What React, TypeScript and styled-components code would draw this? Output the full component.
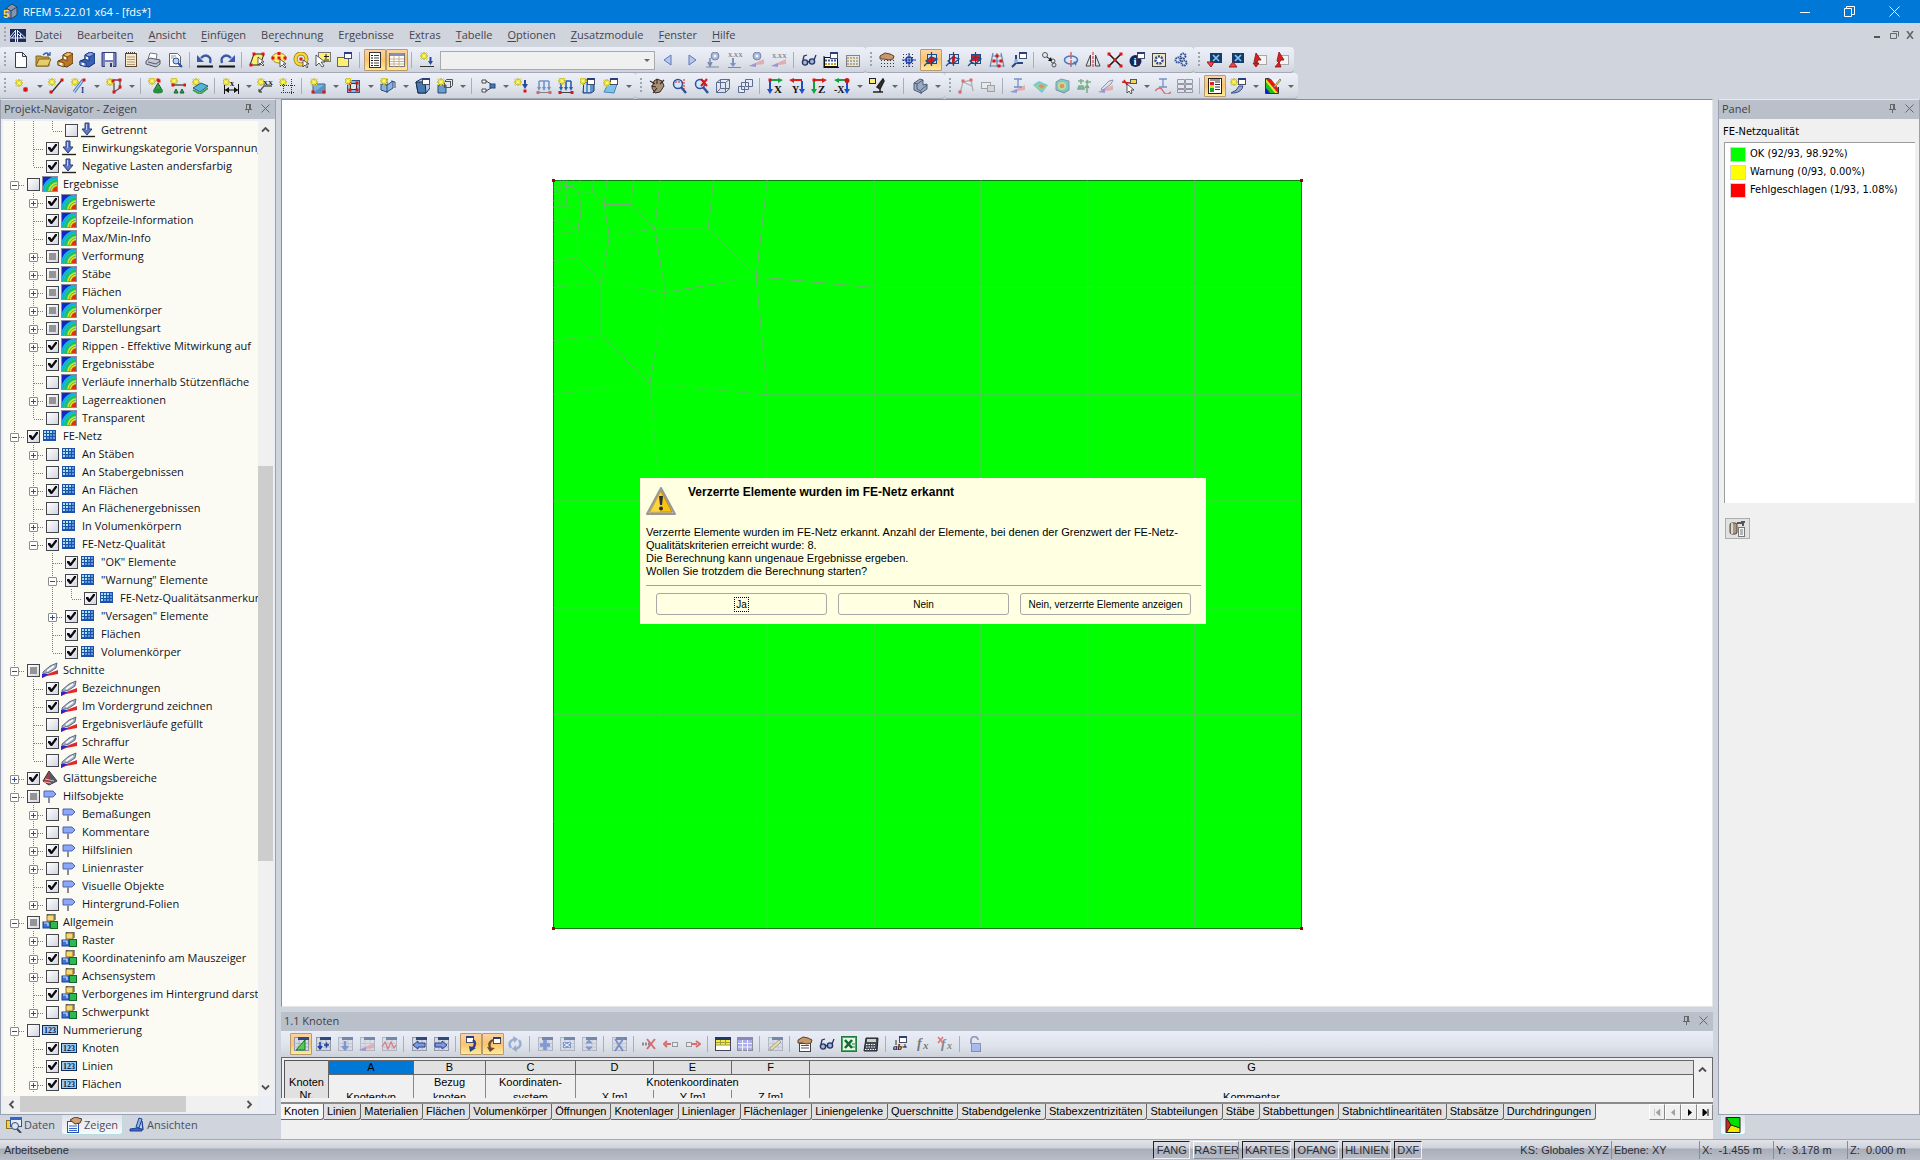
import React, { Fragment, ReactNode, useEffect, useRef } from 'react';
import styled, { createGlobalStyle, css } from 'styled-components';

const UI = '"Open Sans", "Noto Sans", sans-serif';
const PANEL = '"DejaVu Sans Condensed", "DejaVu Sans", sans-serif';
const SANS = '"Liberation Sans", Arial, sans-serif';

const Global = createGlobalStyle`
  * { box-sizing: border-box; }
  body { margin: 0; font: 11px/14px ${UI}; color: #12121c; }
  button, input, select { font: inherit; color: inherit; margin: 0; padding: 0; border: 0; background: none; }
  svg { display: block; flex: none; }
  h1, h2, p, ul { margin: 0; padding: 0; font: inherit; list-style: none; }
`;

/* ---------- icon drawing parts ---------- */

type PProps = { d: string; s?: string; f?: string; w?: number; dash?: string; o?: number };
const P = ({ d, s, f = 'none', w = 1, dash, o }: PProps) => (
  <path d={d} stroke={s ?? 'none'} fill={f} strokeWidth={w} strokeDasharray={dash} opacity={o} />
);
const R = ({ x, y, w, h, f = 'none', s }: { x: number; y: number; w: number; h: number; f?: string; s?: string }) => (
  <rect x={x} y={y} width={w} height={h} fill={f} stroke={s} />
);
const Star = ({ x = 4, y = 4 }: { x?: number; y?: number }) => (
  <>
    <P d={`M${x - 4} ${y}h8M${x} ${y - 4}v8M${x - 3} ${y - 3}l6 6M${x + 3} ${y - 3}l-6 6`} s="#a39a18" w={1.6} />
    <P d={`M${x - 4} ${y}h8M${x} ${y - 4}v8M${x - 3} ${y - 3}l6 6M${x + 3} ${y - 3}l-6 6`} s="#f4ea3c" w={1} />
    <circle cx={x} cy={y} r={1.8} fill="#fff86a" />
  </>
);
const Node = ({ at }: { at: number[][] }) => (
  <>{at.map(([x, y]) => <R key={`${x}-${y}`} x={x - 1.5} y={y - 1.5} w={3} h={3} f="#e01414" />)}</>
);
const Txt = ({ x, y, t, c = '#111', z = 7, i }: { x: number; y: number; t: string; c?: string; z?: number; i?: boolean }) => (
  <text x={x} y={y} fontSize={z} fill={c} fontFamily="Liberation Serif, serif" fontStyle={i ? 'italic' : 'normal'} fontWeight="bold">{t}</text>
);
const MiniWin = ({ x = 8, y = 0 }: { x?: number; y?: number }) => (
  <><R x={x + 0.5} y={y + 0.5} w={7} h={6} f="#fff" s="#444c68" /><R x={x} y={y} w={8} h={2} f="#2b3f7c" /></>
);
const Sheet = ({ c = '#d6dae4' }: { c?: string }) => (
  <>
    <R x={1.5} y={1.5} w={14} h={13} f={c} s="#9298a8" />
    <P d="M1 7.500h14M1 11h14M6 4v11M11 4v11" s="#aeb4c4" />
    <R x={5} y={1} w={11} h={3} f="#30497f" />
  </>
);
const Slope = () => <><P d="M0 14L15 7V12z" f="#e88a8a" /><P d="M0 14L7 11V15z" f="#6a6ad8" /></>;
const Glasses = () => (
  <>
    <circle cx={4} cy={10.500} r={2.600} fill="#9fb6e8" stroke="#28345c" strokeWidth={1.4} />
    <circle cx={11} cy={9.500} r={2.600} fill="#9fb6e8" stroke="#28345c" strokeWidth={1.4} />
    <P d="M6.500 10l2-.5M2 8l1-4 3-1M13 8l2-5" s="#28345c" w={1.3} />
  </>
);
const Cabinet = ({ a, l, b }: { a: string; l: string; b: string }) => (
  <>
    <P d="M6 3l5-3 5 2v9l-6 4-9-2V9l5-2z" f={a} s={b} />
    <P d="M6 3l5-3 5 2-6 3z" f={l} s={b} w={0.7} />
    <P d="M6 3v4l4 2V5zM1 9v4l6 2v-4z" f={l} s={b} w={0.7} />
    <R x={7} y={5} w={2} h={2} f="#fff" /><R x={3} y={11} w={2} h={2} f="#fff" />
  </>
);
const Rainbow = () => (
  <>
    <R x={0} y={0} w={16} h={16} f="#1028c8" />
    <P d="M0 16A16 16 0 0 1 16 0V16z" f="#18b8e8" />
    <P d="M3 16A13 13 0 0 1 16 3V16z" f="#20cc58" />
    <P d="M6 16A10 10 0 0 1 16 6V16z" f="#d8e020" />
    <P d="M10 16a6 6 0 0 1 6-6v6z" f="#e03010" />
    <P d="M1.500 16A14.500 14.500 0 0 1 16 1.500M4.500 16A11.500 11.500 0 0 1 16 4.500M8 16a8 8 0 0 1 8-8" s="#0c9ad0" w={0.6} />
    <R x={0.5} y={0.5} w={15} h={15} s="#8c8c9c" />
  </>
);
const Mesh = () => (
  <>
    <R x={1} y={2} w={13} h={11} f="#1e50a8" />
    {[3, 6, 9].map((y) => [2, 5, 8, 11].map((x) => <R key={`${x}.${y}`} x={x} y={y} w={2} h={2} f={x + y < 12 ? '#a8e4fa' : '#5c9ce0'} />))}
  </>
);
const Plane = ({ r }: { r: string }) => (
  <>
    <R x={4.5} y={2.5} w={9} h={9} f="#cfe2f4" s="#1d4c88" />
    <P d={r} f="#e81818" />
    <P d="M8.500 0v14M3 9l5-4 6 2-6 5zM1 14l4-4" s="#1d4c88" w={1.2} />
  </>
);
const Axis = ({ l, a, b }: { l: string; a: string; b: string }) => (
  <>
    <P d="M3 2h9" s={a} w={2} /><P d="M11 0l5 2-5 3z" f={a} />
    <P d="M3 2v9" s={b} w={2} /><P d="M0 11h6l-3 5z" f={b} /><Node at={[[3, 2]]} />
    <Txt x={7} y={15} t={l} z={11} />
  </>
);
const AxisBack = ({ l, a, b, x }: { l: string; a: string; b: string; x: number }) => (
  <>
    <P d="M4 2h9" s={a} w={2} /><P d="M5 0L0 2l5 3z" f={a} />
    <P d="M13 3v8" s={b} w={2} /><P d="M10 11h6l-3 5z" f={b} />
    <Txt x={x} y={15} t={l} z={10} />
  </>
);
const Loads = () => (
  <><P d="M3 3v8M8 3v8M13 3v8M3 3h10" s="#2b5fae" w={1.6} /><P d="M1 9h4l-2 4zM6 9h4l-2 4zM11 9h4l-2 4z" f="#2b5fae" /><P d="M1 14.500h14" s="#444" /><Node at={[[2, 14.500], [14, 14.500]]} /></>
);
const Magnifier = () => <><circle cx={7} cy={6} r={4.5} fill="#d4e6fa" stroke="#30509c" strokeWidth={1.5} /><P d="M10 9l5 6" s="#30509c" w={2.4} /></>;
const BlueX = ({ d }: { d: string }) => (
  <><R x={3} y={1} w={12} h={10} f="#143c6c" /><P d="M6 3l6 6M12 3L6 9" s="#8ac8f0" w={1.6} /><P d={d} f="#e84a4a" s="#a01818" /></>
);
const RedArrow = ({ d }: { d: string }) => (
  <><R x={5.5} y={3.5} w={10} h={9} f="#f4f4f4" s="#a8a8a8" /><P d={d} f="#d82020" s="#8c1010" w={0.8} /></>
);
const Hand = () => <P d="M1 4l5-3 5 1 4 2-1 3-4 1-5-1H1z" f="#c89868" s="#5a4030" />;
const Dots = () => <P d="M2 8.500h13M2 11.500h13M2 14.500h13" s="#333" dash="1 2" />;
const Arrow = ({ d }: { d: string }) => <P d={d} f="#7d9ae0" s="#2b438c" />;

const icons: Record<string, ReactNode> = {
  neu: <P d="M2.500 .5h7l4 4v11h-11zM9.500 .5v4h4" f="#fff" s="#3c3c48" />,
  oeffnen: <><P d="M1 4h5l1 1h7v9H1z" f="#c8a038" s="#80641c" /><P d="M1 14l3-7h12l-3 7z" f="#e8cc6c" s="#80641c" /><P d="M8 3q4-4 6 0M12 3h3V0" s="#2860a8" w={1.3} /></>,
  block: <Cabinet a="#b87828" l="#eab868" b="#5c380c" />,
  blockBlau: <Cabinet a="#3860b8" l="#80a4e8" b="#142c68" />,
  speichern: <><P d="M1 .5h14v14H1z" f="#7480c0" s="#343c70" /><R x={4} y={1} w={8} h={7} f="#fff" /><R x={4} y={10} w={8} h={5} f="#d8d8e0" /><R x={9} y={11} w={2} h={4} f="#343c70" /></>,
  protokoll: <><R x={2.5} y={1.5} w={11} h={13} f="#f8e8cc" s="#604828" /><P d="M4 5h8M4 7.500h8M4 10h8M4 12.500h8" s="#b09878" /><P d="M3 1h10" s="#444" w={2} dash="1 1" /></>,
  drucken: <><P d="M5 1l7 1-1 6-8-1z" f="#fff" s="#777" /><P d="M1 9l4-3 10 2v4l-4 3L1 12z" f="#c4c8d4" s="#55586a" /><P d="M3 10l8 2 4-3" s="#55586a" /></>,
  vorschau: <><P d="M2.500 1.500h8l3 3v10h-11z" f="#fff" s="#666" /><P d="M4 4h5M4 6h3" s="#999" /><circle cx={9} cy={9} r={3} fill="#b4d4f8" stroke="#30509c" /><P d="M11 11l4 4" s="#30509c" w={2} /></>,
  rueckgaengig: <><P d="M4 6q5-5 9 0 1 2 0 5" s="#3c58a8" w={2.4} /><P d="M0 3v7h7z" f="#3c58a8" /><P d="M0 14.500h16" s="#111" w={2} /></>,
  wiederholen: <><P d="M12 6Q7 1 3 6q-1 2 0 5" s="#3c58a8" w={2.4} /><P d="M16 3v7H9z" f="#3c58a8" /><P d="M0 14.500h16" s="#111" w={2} /></>,
  polygon: <><P d="M5 2h10l-4 11H1z" f="#fdf070" s="#222" /><Node at={[[5, 2], [14, 2], [2, 13]]} /><P d="M9 5v8l2-2 3 3 1-1-3-3h3z" f="#fff" s="#222" w={0.7} /></>,
  kreis: <><ellipse cx={8} cy={6} rx={7} ry={5} fill="#fdf070" stroke="#a89020" /><Node at={[[8, 1.500], [2, 6], [14, 6], [8, 6]]} /><P d="M9 7v8l2-2 3 3 1-1-3-3h3z" f="#fff" s="#222" w={0.7} /></>,
  ring: <><circle cx={8} cy={7} r={5.500} fill="none" stroke="#8c7810" strokeWidth={4} /><circle cx={8} cy={7} r={5.500} fill="none" stroke="#f8d830" strokeWidth={2.600} /><Node at={[[8, 7]]} /><P d="M10 8v7l2-2 2 3 1-1-2-3h3z" f="#fff" s="#222" w={0.7} /></>,
  auswahlPlus: <><R x={3.5} y={0.5} w={12} h={9} f="#fdf070" s="#777" /><P d="M11 2v5M9 4.500h5M9 8h5" s="#222" /><P d="M1 3v11l3-3 3 4 2-1-3-4h4z" f="#fff" s="#333" w={0.8} /></>,
  neuFenster: <><R x={0.5} y={5.5} w={11} h={9} f="#fdf070" s="#666" /><MiniWin x={7} /></>,
  liste: <><R x={2.5} y={0.5} w={11} h={15} f="#fff" s="#333" /><P d="M4 3.500h2M4 6h2M4 8.500h2M4 11h2M4 13.500h2" s="#111" /><P d="M7 3.500h5M7 6h5M7 8.500h5M7 11h5M7 13.500h5" s="#444" /></>,
  tabelle: <><R x={0.5} y={1.5} w={15} h={13} f="#fff" s="#777" /><R x={1} y={1} w={14} h={3} f="#7c94b8" /><P d="M1 7h14M1 9.500h14M1 12h14M5 4v11M10 4v11" s="#cdb088" /></>,
  lastfall: <><Star x={5} y={4} /><P d="M11.500 5v6" s="#2b4b98" w={2} /><P d="M9 9h5l-2.500 4z" f="#2b4b98" /><P d="M1 14.500h14" s="#333" /></>,
  zurueck: <P d="M10 3v10L3 8z" f="#b8c8f0" s="#5c78b8" />,
  vor: <P d="M6 3v10l7-5z" f="#b8c8f0" s="#5c78b8" />,
  ergebnis: <><circle cx={10} cy={4} r={4} fill="#7c94c8" stroke="#3c4c78" /><circle cx={10} cy={4} r={1.600} fill="#fff" /><P d="M5 6v8M3 10l2 4 2-4" s="#30509c" w={1.500} /><P d="M1 15h13" s="#555" /></>,
  werteLast: <><Txt x={1} y={5} t="X.XX" z={6} c="#333" /><P d="M6 6v7" s="#3c5cb0" w={2} /><P d="M3 11h6l-3 4z" f="#3c5cb0" /><P d="M1 15.500h13" s="#555" /></>,
  auge: <><Slope /><circle cx={8} cy={4} r={4} fill="#7c94c8" stroke="#3c4c78" /><circle cx={8} cy={4} r={1.600} fill="#fff" /></>,
  werte: <><Slope /><Txt x={1} y={6} t="X.XX" z={6} c="#333" /></>,
  brille: <Glasses />,
  rechner: <><R x={1.5} y={5.5} w={13} h={9} f="#fff" s="#111" /><MiniWin x={7} /><P d="M2 8.500h12" s="#3858b0" w={2} dash="2 1" /><P d="M2 12h12" s="#c8a020" w={2} dash="2 1" /><P d="M1 15.500h15M1 4v12" s="#111" /></>,
  abakus: <><R x={1.500} y={3.5} w={13} h={11} f="#e8e8ec" s="#444" /><P d="M2 6h12M2 9h12M2 12h12" s="#a08840" w={2} dash="2 1" /></>,
  rasterHand: <><Dots /><Hand /></>,
  fang: <><P d="M2 2.500h12M2 5.500h12M2 8.500h12M2 11.500h12M2 14.500h12" s="#333" dash="1 2" /><P d="M8 1v14M1 8h14" s="#1c3ca8" /><circle cx={8} cy={8} r={3} fill="none" stroke="#1c3ca8" strokeWidth={1.500} /></>,
  ebeneXY: <Plane r="M3 9l5-4 6 2-6 5z" />,
  ebeneYZ: <Plane r="M7 5l3-3v7l-3 3z" />,
  ebeneXZ: <Plane r="M5 3h8v6H5z" />,
  linienraster: <><P d="M4 1L1 15M8 1v14M12 1l3 14M3 4h10M2 9h12M1 14h14" s="#6c88a8" w={1.2} /><Node at={[[8, 4], [12, 9], [5, 9], [10, 14]]} /></>,
  achsen: <><P d="M5 3v8l-4 4M5 11h7" s="#28487c" w={2} /><circle cx={5} cy={9} r={2} fill="#90b4e8" /><MiniWin /></>,
  kopieren: <><circle cx={4} cy={3} r={2.500} fill="none" stroke="#555" /><circle cx={12} cy={9} r={2} fill="none" stroke="#555" /><circle cx={13} cy={13} r={2} fill="none" stroke="#555" /><P d="M6 5l4 3" s="#111" /><P d="M11 9l-4 0 3-4z" f="#111" /></>,
  drehen: <><P d="M8 0v16" s="#d82020" dash="3 1" /><ellipse cx={8} cy={8} rx={6.500} ry={4} fill="none" stroke="#4c78c0" strokeWidth={1.600} /><P d="M10 10l4-1-1 5z" f="#4c78c0" /></>,
  spiegeln: <><P d="M8 0v16" s="#d82020" dash="3 1" /><P d="M1 14L5.500 3v11zM15 14L10.500 3v11z" s="#444" /></>,
  skalieren: <><P d="M2 2l12 12M14 2L2 14" s="#111" w={1.500} /><Node at={[[2, 2], [14, 2], [2, 14], [14, 14], [8, 8]]} /></>,
  info: <><circle cx={6.500} cy={9} r={6} fill="#14285c" /><Txt x={4.500} y={13} t="i" z={11} c="#fff" /><MiniWin /></>,
  einstellung: <><R x={1.5} y={1.5} w={13} h={13} f="#f0e4c8" s="#444" /><circle cx={8} cy={8} r={3.500} fill="#fff" stroke="#2c4c90" strokeWidth={2.500} strokeDasharray="2 1" /></>,
  zahnraeder: <>{[[10, 4], [5, 8], [11, 11]].map(([x, y]) => <circle key={y} cx={x} cy={y} r={2.500} fill="#dce8fa" stroke="#2c4c90" strokeWidth={2} strokeDasharray="1.500 .7" />)}</>,
  ansichtAb: <BlueX d="M0 10h7l-3 5z" />,
  ansichtAuf: <BlueX d="M0 15h8l-4-5z" />,
  pfeilAb: <RedArrow d="M5 1l5 7H7l-1 3-3-1zM2 11h6l-3 4z" />,
  pfeilAuf: <RedArrow d="M6 0l5 8H8l-2 3-2-2zM2 15h6l-2-5z" />,

  knoten: <><Star x={5} y={5} /><Node at={[[11, 11], [12, 11], [11, 12], [12, 12]]} /></>,
  linie: <><Star /><P d="M3 15L14 2" s="#333" w={1.3} /><Node at={[[3, 14], [14, 2]]} /></>,
  stab: <><Star /><P d="M3 14L12 2" s="#4c7cb8" w={3} /><P d="M3 14L12 2" s="#c0dcf4" w={1.2} /><Node at={[[13, 2]]} /><Txt x={10} y={15} t="I" z={8} c="#1c3c8c" /></>,
  linienzug: <><Star /><P d="M7 2h7v8l-6 4V5" s="#555" w={1.3} /><Node at={[[7, 3], [14, 2], [14, 9], [8, 14]]} /></>,
  knotenlager: <><Star x={4} y={3} /><P d="M10 5l4 7H6z" f="#38a048" s="#14602c" /><ellipse cx={10} cy={13} rx={5} ry={2.500} fill="#2c8c3c" /><Node at={[[10, 2], [11, 3]]} /></>,
  linienlager: <><Star x={4} y={3} /><P d="M3 7h12" s="#555" w={1.5} /><Node at={[[3, 7], [15, 7]]} /><P d="M4 15l2-4 2 4zM10 15l2-4 2 4z" f="#38a048" s="#14602c" /></>,
  flaechenlager: <><Star x={4} y={4} /><P d="M1 10l8-5 7 3-8 6z" f="#54b4d8" s="#20607c" /><P d="M1 12l7 4 8-6" s="#38a048" w={2} /></>,
  mass: <><Star x={3} y={4} /><P d="M1.500 7v9M15.500 6v10M2 12h13" s="#111" /><P d="M2 12l4-3v6zM15 12l-4-3v6z" f="#111" /><Txt x={7} y={8} t="x" z={8} /></>,
  massXX: <><Star /><Txt x={6} y={7} t="XX" z={7} /><P d="M2 14l5-6h8M2 14v-3M2 14h3" s="#555" w={1.300} /></>,
  hilfslinie: <><Star /><P d="M4.500 6v10M12.500 1v15M1 7.500h15M2 14.500h14" s="#333" dash="1 1" /></>,
  flaeche: <><P d="M3 6h12v9H3z" f="#80b0dc" s="#3c648c" /><P d="M4 14L14 7v7z" f="#5c90c4" /><Star /><Node at={[[3, 14], [14, 14]]} /></>,
  oeffnung: <><R x={2.5} y={2.5} w={12} h={12} f="#8fb8e0" s="#33557c" /><R x={5.5} y={5.5} w={6} h={6} f="#dfe4ee" s="#333" /><Node at={[[5, 5], [12, 5], [5, 12], [12, 12]]} /><Star x={3} y={3} /></>,
  durchdringung: <><P d="M1 6l6 1 6-4v7l-6 4-6-2z" f="#8ab4dc" s="#2c4c7c" /><P d="M7 1v14M11 3l4 1v6" s="#2c4c7c" /><Star x={4} y={3} /></>,
  volumen: <><P d="M2 4l5-3h9v9l-4 5-8 0z" f="#a8c8ec" s="#182c50" /><P d="M2 4h9l1 11H4z" f="#4878b0" s="#182c50" /><MiniWin x={8} /></>,
  quader: <><P d="M1 7h8v8H1z" f="#6a9ccc" s="#244a78" /><R x={7.5} y={3.5} w={6} h={6} s="#555" /><P d="M7.500 3.500l2-2h6v6l-2 2" s="#555" /><Star x={4} y={4} /></>,
  gelenk: <><P d="M2 2h4v3H2zM2 11h4v3H2zM6 3l5 3M6 13l5-3" f="#fff" s="#444" /><R x={10} y={6} w={5} h={4} f="#4878b0" s="#244a78" /></>,
  knotenlast: <><Star x={4} y={4} /><P d="M11 2v6" s="#2b4b98" w={2} /><P d="M8 6h6l-3 5z" f="#2b4b98" /><Node at={[[11, 13]]} /></>,
  linienlast: <Loads />,
  stablast: <><Loads /><Star x={4} y={3} /></>,
  flaechenlast: <><P d="M4 2h10v11l-3 2H3z" f="#5c94cc" s="#1c3c6c" /><P d="M5 6v8M9 6v8" s="#fff" w={1.400} /><MiniWin x={7} /><Star x={3} y={3} /></>,
  freieLast: <><P d="M1 14l4-8h9l-3 9z" f="#7cc4f0" s="#4c84b0" /><MiniWin x={7} /><Star x={4} y={5} /></>,
  greifer: <><P d="M5 3l3-2 5 2 2 5-4 6-5 1-3-5z" f="#a89078" s="#3c2c1c" /><P d="M1 3l5 3M2 8l5 1M8 1v5M15 2l-4 4M8 10l-4 5" s="#3c2c1c" w={1.200} /></>,
  zoom: <><Magnifier /><P d="M4 4h9M13 1v10" s="#d02020" dash="2 1" /></>,
  zoomAus: <><Magnifier /><P d="M8 1l6 7M14 1L8 8" s="#d81818" w={2} /></>,
  drahtwuerfel: <><P d="M1.500 4.500h9v10h-9zM5.500 1.500h9v9h-9zM1.500 4.500l4-3M10.500 4.500l4-3M10.500 14.500l4-4M1.500 14.500l4-4" s="#5c6c90" /></>,
  wuerfel2: <><P d="M8.500 1.500h7v7h-7zM4.500 4.500h7v7h-7zM1.500 8.500h6v6h-6z" s="#5c6c90" f="#e4eaf6" /></>,
  achseX: <Axis l="X" a="#18a040" b="#2050c8" />,
  achseY: <AxisBack l="Y" a="#d82020" b="#2050c8" x={3} />,
  achseZ: <Axis l="Z" a="#d82020" b="#18a040" />,
  achseMX: <><AxisBack l="-X" a="#18a040" b="#2050c8" x={0} /><circle cx={13} cy={2.500} r={2.500} fill="#c81818" /></>,
  mikroskop: <><R x={0.5} y={0.5} w={6} h={5} f="#fdf070" s="#222" /><P d="M14 1L8 9l3 2 4-8zM4 14h10M11 11v3" f="#333" s="#222" w={1.500} /></>,
  profil: <><P d="M2 5l6-4 3 1v5l4-1v5l-6 4-7-3z" f="#9cacc0" s="#4c5c74" /><P d="M2 5l3 1v5l4 2v3M5 6l6-4M9 12l6-5" s="#4c5c74" /></>,
  verlauf: <><P d="M2 15L5 4l8-2 2 11M5 4l9 4" s="#888" w={1.300} /><Node at={[[5, 3], [13, 2], [2, 14]]} /></>,
  film: <><R x={1.5} y={4.5} w={9} h={6} f="#eee" s="#777" /><R x={7.5} y={7.5} w={7} h={6} f="#ccc" s="#777" /></>,
  stabErg: <><Slope /><P d="M4 1h8M8 1v8M4 9h8" s="#2858b0" w={1.300} /></>,
  flaecheErg: <><P d="M1 7l6-4 9 4-6 8z" f="#20b8e0" /><P d="M3 8l5-3 7 3-5 5z" f="#60d040" /><P d="M6 8l3-2 4 2-3 3z" f="#e85020" /></>,
  koerperErg: <><P d="M2 4l5-3 8 2v9l-5 3-8-3z" f="#38b8b0" s="#44607c" /><circle cx={8} cy={8} r={4} fill="#a8e040" /><circle cx={8} cy={8} r={2.300} fill="#e85020" /></>,
  lagerErg: <><P d="M5 1v5M2 3h6M3 8h4l1 3H2zM11 15V9M9 10l2-3 2 3M15 4h-4M12 2l-2 2 2 2" f="#48a858" s="#388848" w={1.500} /></>,
  schnitt: <><Slope /><P d="M3 11L11 3l4-1-2 4-8 6z" f="#d8e0ec" s="#56607c" /></>,
  werteAn: <><P d="M1 4l8 1M3 2l4 6" s="#c02020" w={1.500} /><P d="M6 6v9l2-2 2 3 1-1-1-3h3z" f="#fff" s="#333" w={0.8} /><R x={9.5} y={1.5} w={6} h={4} f="#f0d850" s="#555" /></>,
  profilErg: <><P d="M4 1h8M8 1v8M4 9h8" s="#2858b0" w={1.300} /><P d="M0 13q5-6 8 0t8 1" s="#d82020" w={1.300} /></>,
  tafeln: <><P d="M.5 1.500h7v4h-7zM8.500 1.500h7v4h-7zM.5 6.500h7v4h-7zM8.500 6.500h7v4h-7zM.5 11.500h7v3h-7zM8.500 11.500h7v3h-7z" f="#e4e8f0" s="#667" /></>,
  farbtafel: <><R x={1.5} y={0.5} w={13} h={15} f="#fff" s="#222" /><R x={3} y={4} w={4} h={3} f="#e02020" /><R x={3} y={7} w={4} h={3} f="#e8d820" /><R x={3} y={10} w={4} h={4} f="#20a030" /><P d="M8 4h5M8 6.500h5M8 9h5M8 11.500h5M3 2h10" s="#333" /></>,
  pinselNeu: <><MiniWin x={8} /><Star /><P d="M13 8Q12 14 4 15l-3 0q6-2 8-7z" f="#90a8d8" s="#3c5080" /></>,
  farbskala: <><R x={1} y={1} w={12} h={14} f="#f4f4f4" /><P d="M1 1l12 14H1z" f="#20c020" /><P d="M1 4l9 11h3L1 1z" f="#f0e020" /><P d="M1 1h5l7 9v5z" f="#e01818" /><P d="M1 10l4 5H1z" f="#1020d0" /><P d="M15 1l-5 6-1 2 2-1 5-6z" f="#f8d878" s="#886" /><P d="M.5 .5v15h13V9M.5 .5h4" s="#333" /></>,

  bearbeiten: <><Sheet /><P d="M3 14L12 4v10z" f="#58c858" s="#187828" /></>,
  einfuegen: <><Sheet /><P d="M5 6v6M3 10l2 3 2-3M9 9h5M11.500 6.500v5" s="#1840a0" w={1.500} /></>,
  lasten: <><Sheet /><P d="M8 5v7" s="#3c64c0" w={2.400} /><P d="M4 10h8l-4 5z" f="#3c64c0" /></>,
  ergebnisse: <><Sheet /><Slope /></>,
  kurven: <><Sheet /><P d="M1 11l3-5 3 7 3-7 3 6 2-3" s="#d83838" w={1.200} /></>,
  links: <><Sheet /><Arrow d="M2 9l5-4v2h7v4H7v2z" /></>,
  rechts: <><Sheet /><Arrow d="M14 9L9 5v2H2v4h7v2z" /></>,
  sync1: <><MiniWin x={3} y={0} /><P d="M10 4q4 3 0 8" s="#2b3f8c" w={2.400} /><P d="M6 10l7 2-6 4z" f="#2b3f8c" /></>,
  sync2: <><MiniWin x={8} y={1} /><P d="M8 4q-5 2-3 8" s="#6b4c2c" w={2.400} /><P d="M2 11l8 1-5 4z" f="#6b4c2c" /></>,
  aktual: <><P d="M4 12Q0 6 7 3M12 4q4 6-3 9" s="#6c88b8" w={2.400} /><P d="M6 0l5 3-4 4zM10 16l-5-3 4-4z" f="#6c88b8" /></>,
  zeilePlus: <><Sheet /><P d="M8 4v10M3 9h10" s="#4468c0" w={3.600} /></>,
  zeileMinus: <><Sheet /><R x={4} y={6} w={8} h={6} f="#4468c0" /><P d="M5 7l6 4M11 7l-6 4" s="#fff" /></>,
  zeileTeil: <><Sheet /><P d="M5 7l3-3 3 3zM5 11l3 3 3-3z" f="#4468c0" s="#4468c0" /></>,
  zeileX: <><Sheet /><P d="M4 3l8 12M12 3L4 15" s="#3858b0" w={1.800} /></>,
  loeschen: <><P d="M1 8h9" s="#555" w={3} dash="2 1" /><P d="M6 3l8 10M14 3L6 13" s="#d02020" w={2} /></>,
  links2: <><R x={9.5} y={6.5} w={5} h={4} f="#eee" s="#666" /><P d="M8 8H3M4 5L1 8l3 3" s="#d02020" w={2} /></>,
  rechts2: <><R x={1.5} y={6.5} w={5} h={4} f="#eee" s="#666" /><P d="M7 8h5M11 5l4 3-4 3" s="#d02020" w={2} /></>,
  gelb: <><R x={0.5} y={1.5} w={15} h={13} f="#fff" s="#445" /><R x={1} y={4} w={14} h={5} f="#f4ec40" /><R x={0} y={1} w={16} h={3} f="#20386c" /><P d="M1 9h14M1 6.500h14M5.500 4v5M10.500 4v5" s="#a0a038" /></>,
  violett: <><R x={0.5} y={1.5} w={15} h={13} f="#8c88ec" s="#556" /><R x={0} y={1} w={16} h={3} f="#4c4c90" /><P d="M1 7.500h14M1 11h14M5.500 4v11M10.500 4v11" s="#fff" /></>,
  notiz: <><Sheet /><P d="M3 12l9-8 2 2-9 8H3z" f="#f0e060" s="#777" /></>,
  handTab: <><R x={2.5} y={3.5} w={11} h={12} f="#fff" s="#444" /><P d="M4 9.500h8M4 12h8" s="#555" /><R x={2} y={6} w={5} h={2} f="#2b3f7c" /><Hand /></>,
  excel: <><R x={0.5} y={0.5} w={15} h={15} f="#e8f6ea" s="#1e7d3c" /><R x={1.5} y={1.5} w={13} h={13} s="#4ca864" /><P d="M4 4l7 8M11 4l-7 8" s="#156c30" w={2.600} /><P d="M11 8h3M11 11h3" s="#1e7d3c" /></>,
  taschenrechner: <><P d="M3 2h12l-1 13H1z" f="#454a58" s="#222" /><R x={4} y={3} w={9} h={3} f="#c8d8c8" /><P d="M3 8.500h10M3 11h10M2 13.500h11" s="#fff" dash="1.500 1" /></>,
  gleichung: <><MiniWin x={6} /><P d="M3 4v5M12 8v3" s="#333" /><Txt x={0} y={14} t="ab=" z={9} i /></>,
  fx: <><Txt x={2} y={12} t="f" z={14} c="#333" i /><Txt x={8} y={13} t="x" z={11} c="#333" i /></>,
  fxWeg: <><Txt x={4} y={12} t="f" z={13} c="#444" i /><Txt x={10} y={13} t="x" z={10} c="#444" i /><P d="M1 1l5 6M6 1L1 7" s="#d83030" w={1.600} /></>,
  schloss: <><P d="M4 8V4a3.500 3.500 0 0 1 7 0" s="#5868a0" w={1.800} /><R x={4.5} y={7.5} w={9} h={8} f="#84a4f0" s="#4c5c98" /></>,

  pfeil: <><P d="M5 1h4v6h3l-5 6-5-6h3z" f="#5c78c8" s="#2c3c78" /><P d="M6.500 2v6" s="#c0ccf0" /><P d="M1 14.500h14" s="#222" w={1.400} /></>,
  verlaufsbild: <Rainbow />,
  netz: <Mesh />,
  schnitte: <><P d="M0 14l16-6v4L5 14l-5 2z" f="#e02828" /><P d="M0 12l7 0-7 4z" f="#2828d0" /><P d="M1 10L8 4l7-3-1 5-6 4-7 2z" f="#a4b0c4" s="#44506c" w={0.8} /><P d="M5 9l7-5" s="#fff" w={1.600} /></>,
  glaettung: <><P d="M7 1l8 10-8 4-6-4z" f="#a44048" s="#333" /><P d="M7 1v14l8-4z" f="#4c5c6c" /><P d="M3 9l9 2M2 12l7 1" s="#f0b0b0" /></>,
  schild: <><P d="M2 3h9l3 3-3 3H2z" f="#8ca8f4" s="#4c60b8" /><R x={6} y={9} w={2} h={6} f="#8c8c94" /></>,
  wuerfel: <><R x={5} y={1} w={7} h={6} f="#f4d874" s="#8c7020" /><R x={1} y={8} w={7} h={6} f="#3c74d8" s="#183c88" /><R x={8.5} y={7.5} w={7} h={7} f="#30b850" s="#106828" /><P d="M2 9l4 0v3" s="#cfe0ff" w={1.200} /><P d="M5 1l2-1h6v6" s="#333" /></>,
  zahlen: <><R x={0.5} y={3.5} w={15} h={9} f="#9cccf4" s="#0c2c5c" /><Txt x={2} y={11} t="123" z={8} c="#0c1c40" /></>,
  daten: <><R x={0.5} y={3.5} w={8} h={8} f="#f4d040" s="#8c7020" /><R x={4.5} y={0.5} w={11} h={9} f="#e4ecfa" s="#2850a8" /><R x={4} y={0} w={12} h={3} f="#3464c8" /><circle cx={9} cy={9} r={3.500} fill="#d4e8fc" stroke="#445" /><P d="M11 12l4 4" s="#445" w={2} /></>,
  zeigen: <><R x={1.5} y={4.5} w={11} h={11} f="#f4f8fe" s="#2850a8" /><P d="M3 9h8M3 11.500h8M3 13.500h8" s="#3464c8" /><P d="M4 3l5-3 7 2-2 4-5 1z" f="#d0a070" s="#4c3828" /></>,
  ansichten: <><P d="M10 1l3 1-3 9-3-1z" f="#8cb4f0" s="#1c4098" /><P d="M1 12l7-1 5 1v2H1z" f="#3c68c0" s="#1c4098" /><P d="M13 4l1 9" s="#1c4098" w={1.300} /></>,
  qualitaet: <><R x={1} y={0} w={14} h={16} f="#00e000" /><P d="M1 0l5 8-5 8z" f="#e02020" /><P d="M6 8l9 3v5H1z" f="#f4e800" /><P d="M1 0l5 8-5 8M6 8l9 3M1 .5h14v15H1z" s="#222" /></>,
};

const Icon = ({ name, size = 16 }: { name: string; size?: number }) => (
  <svg width={size} height={size} viewBox="0 0 16 16" aria-hidden="true">{icons[name]}</svg>
);

const PinGlyph = () => <svg width="7" height="9" viewBox="0 0 7 9"><path d="M1.500 0v5M4.500 0v5M5.500 0v5M1 .5h5M0 5.500h7M3.500 6v3" stroke="#666" fill="none" /></svg>;
const CloseGlyph = () => <svg width="9" height="9" viewBox="0 0 9 9"><path d="M.5.5l8 8M8.500.5l-8 8" stroke="#666" fill="none" /></svg>;

/* ---------- window frame ---------- */

const Window = styled.div`
  display: grid;
  grid-template-rows: 23px 24px auto minmax(0, 1fr) 21px;
  height: 100vh;
  background: #d0d4dd;
  overflow: hidden;
`;
const TitleBar = styled.header`
  display: flex; align-items: center; padding: 0 3px 0 2px;
  background: #0078d7; color: #fff;
  h1 { flex: 1; padding-left: 5px; }
`;
const WinButton = styled.button` width: 45px; height: 23px; display: grid; place-items: center; `;
const MenuBar = styled.nav` display: flex; align-items: center; padding-right: 2px; color: #45454f; `;
const Grip = styled.span`
  flex: none; width: 2px; height: 16px; margin: 0 4px;
  background: repeating-linear-gradient(#9ea3b0 0 2px, transparent 2px 4px);
`;
const MenuLogo = styled.svg` margin-right: 2px; `;
const MenuItem = styled.button`
  padding: 0 8px 0 7px; line-height: 18px; white-space: nowrap;
  u { text-underline-offset: 2px; }
`;
const Spacer = styled.span` flex: 1; `;
const MdiButton = styled.button` width: 16px; height: 16px; display: grid; place-items: center; `;

const Toolbars = styled.div` display: grid; grid-template-rows: 26px 26px; `;
const ToolRow = styled.div` display: flex; align-items: flex-start; `;
const ToolGroup = styled.div`
  display: flex; align-items: center; height: 26px; padding: 1px 2px 0 0;
  background: linear-gradient(#edf0f8, #e2e6ef 50%, #ced3dd);
  border-bottom: 1px solid #a6a8b4; border-radius: 2px 4px 4px 2px;
`;
const ToolButton = styled.button<{ $on?: boolean; $dim?: boolean; $split?: boolean }>`
  flex: none; width: ${(p) => (p.$split ? 24 : 22)}px; height: 22px;
  display: grid; place-items: center; border-radius: 1px;
  svg { opacity: ${(p) => (p.$dim ? 0.6 : 1)}; }
  ${(p) => p.$on && css`
    background: linear-gradient(#fbd3a4, #fbc46c 50%, #ffe99a);
    border: 1px solid #b89a70;
  `}
`;
const DropButton = styled.button`
  flex: none; width: 11px; height: 22px; display: grid; place-items: center;
  &::after { content: ''; border: 3px solid transparent; border-top: 3px solid #666; border-bottom: 0; }
`;
const Separator = styled.span` flex: none; width: 1px; height: 16px; margin: 0 4px 0 3px; background: #a9aebb; `;
const ComboWrap = styled.div`
  position: relative; width: 215px; height: 19px; margin: 0 3px 0 2px;
  &::after {
    content: ''; position: absolute; right: 5px; top: 8px;
    border: 3px solid transparent; border-top: 3px solid #666; border-bottom: 0;
  }
`;
const Combo = styled.select` appearance: none; width: 100%; height: 100%; border: 1px solid #a9a9ad; background: #f0f0f0; `;

/* suffixes: * pressed, ~ unavailable, > with drop-down; | is a separator */
const Tools = ({ items }: { items: string }) => (
  <>
    {items.split(' ').map((it, k) => {
      if (it === '|') return <Separator key={k} />;
      if (it === '[]') return <ComboWrap key={k}><Combo aria-label="Lastfall" /></ComboWrap>;
      const name = it.replace(/[*~>]/g, '');
      const split = it.includes('>');
      return (
        <Fragment key={k}>
          <ToolButton aria-label={name} $on={it.includes('*')} $dim={it.includes('~')} $split={split}><Icon name={name} /></ToolButton>
          {split && <DropButton aria-label={`${name} Auswahl`} />}
        </Fragment>
      );
    })}
  </>
);

const rows = [
  [
    'neu oeffnen block blockBlau speichern protokoll drucken vorschau | rueckgaengig wiederholen | polygon kreis ring auswahlPlus neuFenster | liste* tabelle* | lastfall [] zurueck vor ergebnis~ werteLast~ auge~ werte~ | brille rechner abakus~',
    'rasterHand fang ebeneXY* ebeneYZ ebeneXZ linienraster achsen | kopieren drehen spiegeln skalieren info einstellung zahnraeder',
    'ansichtAb ansichtAuf pfeilAb pfeilAuf',
  ],
  [
    'knoten> linie stab> linienzug> | knotenlager linienlager flaechenlager | mass> massXX hilfslinie | flaeche> oeffnung> durchdringung> volumen quader> | gelenk> knotenlast linienlast~ stablast flaechenlast freieLast>',
    'greifer zoom zoomAus drahtwuerfel wuerfel2 | achseX achseY achseZ achseMX> mikroskop> | profil>',
    'verlauf~ film~ | stabErg~ flaecheErg~ koerperErg~ lagerErg~ schnitt~ werteAn> profilErg~ tafeln~ | farbtafel* pinselNeu> farbskala>',
  ],
];
const tableTools = 'bearbeiten* einfuegen lasten~ ergebnisse~ kurven~ | links rechts | sync1* sync2* aktual~ | zeilePlus~ zeileMinus~ zeileTeil~ | zeileX~ | loeschen~ links2~ rechts2~ | gelb violett~ | notiz~ | handTab brille excel taschenrechner | gleichung fx~ fxWeg~ | schloss~';

/* ---------- docked panels ---------- */

const Work = styled.main`
  display: grid; grid-template-columns: 276px minmax(0, 1fr) 202px; column-gap: 5px; min-height: 0;
`;
const Dock = styled.section`
  display: grid; grid-template-rows: minmax(0, 1fr) 24px; min-height: 0;
`;
const DockFrame = styled.div<{ $bg?: string }>`
  display: flex; flex-direction: column; min-height: 0;
  border: 1px solid #9aa0ae; border-top-color: #e6e9f0; background: ${(p) => p.$bg ?? '#eceef6'};
`;
const DockTitle = styled.header`
  flex: none; display: flex; align-items: center; gap: 9px; height: 19px; padding: 0 5px 2px 3px;
  background: #bac0ca; color: #3d3f4a;
  h2 { flex: 1; }
  button { display: grid; }
`;
const TreeBox = styled.div`
  flex: 1; min-height: 0; margin: 2px;
  display: grid; grid-template: minmax(0, 1fr) 16px / minmax(0, 1fr) 15px;
`;
const Tree = styled.ul` padding-left: 2px; background: #fcfbf3; overflow: hidden; `;
const TreeRow = styled.li` display: flex; align-items: center; height: 18px; white-space: nowrap; `;
const Cell = styled.span`
  flex: none; display: grid; height: 18px;
  > * { grid-area: 1 / 1; }
`;
const Expander = styled.button`
  width: 9px; height: 9px; margin: 6px 0 0 5px; z-index: 1;
  border: 1px solid #8c8c8c; border-radius: 1px; background: #fff;
  display: grid; place-items: center;
`;
const RowLabel = styled.label` display: flex; align-items: center; gap: 2px; span { padding-left: 3px; line-height: 18px; } `;
const Check = styled.input`
  appearance: none; flex: none; width: 13px; height: 13px;
  border: 1px solid #45454c; background: linear-gradient(135deg, #fff, #d2d6e0);
  display: grid; place-items: center;
  &:checked::after {
    content: ''; width: 9px; height: 9px; background: #0c0c10;
    clip-path: polygon(0 40%, 25% 40%, 40% 60%, 80% 5%, 100% 5%, 100% 22%, 45% 95%, 30% 95%, 0 58%);
  }
  &:indeterminate::after { content: ''; width: 7px; height: 7px; background: #949494; }
`;

type Item = { level: number; exp: '' | '+' | '-'; state: string; icon: string; text: string };
const item = (level: number, exp: Item['exp'], state: string, icon: string, text: string): Item => ({ level, exp, state, icon, text });
const V = 'verlaufsbild';
const tree: Item[] = [
  item(2, '', '0', 'pfeil', 'Getrennt'),
  item(1, '', '1', 'pfeil', 'Einwirkungskategorie Vorspannung'),
  item(1, '', '1', 'pfeil', 'Negative Lasten andersfarbig'),
  item(0, '-', '0', V, 'Ergebnisse'),
  item(1, '+', '1', V, 'Ergebniswerte'),
  item(1, '', '1', V, 'Kopfzeile-Information'),
  item(1, '', '1', V, 'Max/Min-Info'),
  item(1, '+', 'm', V, 'Verformung'),
  item(1, '+', 'm', V, 'Stäbe'),
  item(1, '+', 'm', V, 'Flächen'),
  item(1, '+', 'm', V, 'Volumenkörper'),
  item(1, '+', 'm', V, 'Darstellungsart'),
  item(1, '+', '1', V, 'Rippen - Effektive Mitwirkung auf'),
  item(1, '', '1', V, 'Ergebnisstäbe'),
  item(1, '', '0', V, 'Verläufe innerhalb Stützenfläche'),
  item(1, '+', 'm', V, 'Lagerreaktionen'),
  item(1, '', '0', V, 'Transparent'),
  item(0, '-', '1', 'netz', 'FE-Netz'),
  item(1, '+', '0', 'netz', 'An Stäben'),
  item(1, '', '0', 'netz', 'An Stabergebnissen'),
  item(1, '+', '1', 'netz', 'An Flächen'),
  item(1, '', '0', 'netz', 'An Flächenergebnissen'),
  item(1, '+', '0', 'netz', 'In Volumenkörpern'),
  item(1, '-', '1', 'netz', 'FE-Netz-Qualität'),
  item(2, '', '1', 'netz', '"OK" Elemente'),
  item(2, '-', '1', 'netz', '"Warnung" Elemente'),
  item(3, '', '1', 'netz', 'FE-Netz-Qualitätsanmerkungen'),
  item(2, '+', '1', 'netz', '"Versagen" Elemente'),
  item(2, '', '1', 'netz', 'Flächen'),
  item(2, '', '1', 'netz', 'Volumenkörper'),
  item(0, '-', 'm', 'schnitte', 'Schnitte'),
  item(1, '', '1', 'schnitte', 'Bezeichnungen'),
  item(1, '', '1', 'schnitte', 'Im Vordergrund zeichnen'),
  item(1, '', '0', 'schnitte', 'Ergebnisverläufe gefüllt'),
  item(1, '', '1', 'schnitte', 'Schraffur'),
  item(1, '', '0', 'schnitte', 'Alle Werte'),
  item(0, '+', '1', 'glaettung', 'Glättungsbereiche'),
  item(0, '-', 'm', 'schild', 'Hilfsobjekte'),
  item(1, '+', '0', 'schild', 'Bemaßungen'),
  item(1, '+', '0', 'schild', 'Kommentare'),
  item(1, '+', '1', 'schild', 'Hilfslinien'),
  item(1, '+', '0', 'schild', 'Linienraster'),
  item(1, '', '1', 'schild', 'Visuelle Objekte'),
  item(1, '+', '0', 'schild', 'Hintergrund-Folien'),
  item(0, '-', 'm', 'wuerfel', 'Allgemein'),
  item(1, '+', '0', 'wuerfel', 'Raster'),
  item(1, '+', '1', 'wuerfel', 'Koordinateninfo am Mauszeiger'),
  item(1, '+', '0', 'wuerfel', 'Achsensystem'),
  item(1, '', '1', 'wuerfel', 'Verborgenes im Hintergrund darstellen'),
  item(1, '+', '0', 'wuerfel', 'Schwerpunkt'),
  item(0, '-', '0', 'zahlen', 'Nummerierung'),
  item(1, '', '1', 'zahlen', 'Knoten'),
  item(1, '', '1', 'zahlen', 'Linien'),
  item(1, '+', '1', 'zahlen', 'Flächen'),
];
/* the list goes on below the visible part on both outer levels */
const continues = (from: number, level: number) => {
  const next = tree.slice(from + 1).find((t) => t.level <= level);
  return next ? next.level === level : level < 2;
};
const Guide = ({ d, w }: { d: string; w: number }) => (
  <svg width={w} height="18" viewBox={`0 0 ${w} 18`}><path d={d} stroke="#7c7c7c" fill="none" strokeDasharray="1 1" /></svg>
);

function TreeItem({ it, index }: { it: Item; index: number }) {
  const ref = useRef<HTMLInputElement>(null);
  useEffect(() => { if (ref.current) ref.current.indeterminate = it.state === 'm'; }, [it.state]);
  const ancestors = Array.from({ length: it.level }, (_, l) => continues(index, l));
  const down = continues(index, it.level) ? 18 : 10;
  return (
    <TreeRow>
      {ancestors.map((on, l) => <Cell key={l}><Guide w={19} d={on ? 'M9.500 0v18' : ''} /></Cell>)}
      <Cell>
        <Guide w={22} d={`M9.500 0v${down}M10 10.500h10`} />
        {it.exp && (
          <Expander aria-label={it.exp === '+' ? 'Öffnen' : 'Schließen'}>
            <svg width="5" height="5" viewBox="0 0 5 5"><path d={it.exp === '+' ? 'M0 2.500h5M2.500 0v5' : 'M0 2.500h5'} stroke="#2c4c9c" /></svg>
          </Expander>
        )}
      </Cell>
      <RowLabel>
        <Check ref={ref} type="checkbox" defaultChecked={it.state === '1'} />
        <Icon name={it.icon} /><span>{it.text}</span>
      </RowLabel>
    </TreeRow>
  );
}

const ScrollV = styled.div`
  display: grid; grid-template-rows: 17px 328fr 394fr 218fr 17px; justify-items: center; align-items: center;
  background: #f0f0f0;
`;
const ScrollH = styled.div`
  display: grid; grid-template-columns: 17px 166fr 55fr 17px; grid-column: 1; justify-items: center; align-items: center;
  background: #f0f0f0;
`;
const Thumb = styled.span` width: 100%; height: 100%; background: #cdcdcd; `;
const ScrollBtn = styled.button` display: grid; place-items: center; width: 15px; height: 15px; `;
const Chevron = ({ turn }: { turn: number }) => (
  <svg width="9" height="9" viewBox="0 0 9 9"><path d="M1 6.500l3.500-3.500L8 6.500" transform={`rotate(${turn} 4.500 4.500)`} stroke="#505050" strokeWidth="1.800" fill="none" /></svg>
);

const DockTabs = styled.div` display: flex; align-items: flex-start; padding-left: 2px; gap: 2px; `;
const DockTab = styled.button<{ $on?: boolean }>`
  display: flex; align-items: center; gap: 2px; height: 20px; padding: 0 4px; color: #4c4f5c;
  border-radius: 0 0 3px 3px;
  ${(p) => p.$on && css`
    border: 1px solid #b8dce0; border-top: 0; background: linear-gradient(#dfe3ea, #f8f9fb);
  `}
`;

/* ---------- centre: drawing and table ---------- */

const Centre = styled.div` display: grid; grid-template-rows: minmax(0, 1fr) 127px; row-gap: 5px; min-width: 0; min-height: 0; `;
const Viewport = styled.section`
  position: relative; background: #fff; min-height: 0;
  border: 1px solid #e4e6ea; border-top-color: #8c8c94; border-left-color: #8c8c94;
`;
const Drawing = styled.svg` width: 100%; height: 100%; `;

const meshUnit = [
  'M480 0L464 144L608 289', 'M304 144H464', 'M320 0L304 144L335 336L289 609',
  'M0 321L143 305L335 336L608 289', 'M0 480L143 465L289 609', 'M143 305V465',
];
const meshRest = [
  'M641 0L608 289L641 643V2244', 'M289 609L314 894L321 963V2244', 'M608 289L961 321H2244', 'M0 641L289 609L641 643H2244',
  ...[3, 4, 5, 6].map((k) => `M${320.5 * k} 0V2244`), ...[3, 4, 5, 6].map((k) => `M0 ${320.5 * k}H2244`),
];
const scaleTo = (d: string, k: number) => d.replace(/[\d.]+/g, (n) => String(Math.round((Number(n) * k) / 3 * 10) / 10));

const Model = () => (
  <Drawing viewBox="0 0 1430 906" aria-label="FE-Netz">
    <g transform="translate(271 80)">
      <rect x="0.500" y="0.500" width="748" height="748" fill="#0f0" stroke="#0c7a0c" />
      <g transform="translate(0.500 0.500)" fill="none" stroke="#979f97" strokeDasharray="1 1">
        {[1, 0.5, 0.25, 0.125, 0.0625].map((k) => meshUnit.map((d) => <path key={d + k} d={scaleTo(d, k)} />))}
        {meshRest.map((d) => <path key={d} d={scaleTo(d, 1)} />)}
      </g>
      {[[0, 0], [748, 0], [0, 748], [748, 748]].map(([x, y]) => <rect key={`${x}${y}`} x={x - 1} y={y - 1} width="3" height="3" fill="#900808" />)}
    </g>
  </Drawing>
);

const Dialog = styled.div`
  position: absolute; left: 358px; top: 378px; width: 566px; padding: 7px 5px 9px 6px;
  background: #ffffe1; font: 11px/13px ${SANS}; color: #000;
`;
const DialogHead = styled.div`
  display: flex; gap: 10px; height: 40px;
  h2 { font: bold 12px/14px ${SANS}; }
`;
const DialogText = styled.div` padding: 1px 0 7px; border-bottom: 1px solid #a0a0a0; `;
const DialogButtons = styled.div` display: grid; grid-template-columns: repeat(3, 1fr); gap: 11px; padding: 7px 10px 0; `;
const DialogButton = styled.button`
  height: 22px; border: 1px solid #a8a8a8; border-radius: 3px; font-size: 10px; white-space: nowrap;
  span { display: inline-block; padding: 0 1px; outline: 1px dotted #000; }
`;

const TableDock = styled.section` display: flex; flex-direction: column; min-width: 0; background: #f0f0f0; `;
const TableTools = styled.div`
  flex: none; display: flex; align-items: center; height: 26px; padding-left: 9px; overflow: hidden;
  background: linear-gradient(#eaedf7, #dfe3ec 55%, #cdd2db);
`;
const GridBox = styled.div`
  flex: none; height: 41px; margin-bottom: 4px; display: grid; grid-template-columns: minmax(0, 1fr) 17px; overflow: hidden;
  padding: 2px 1px 0 2px; border: solid #686868; border-width: 1px 1px 0 1px;
  font: 11px/14px ${SANS}; color: #000;
`;
const NodeTable = styled.table`
  width: 100%; table-layout: fixed; border-collapse: collapse; border: 1px solid #555;
  th { padding: 0; font-weight: normal; text-align: center; white-space: nowrap; vertical-align: top; }
`;
const Letter = styled.th<{ $on?: boolean }>`
  height: 14px; line-height: 13px; border: 1px solid #666;
  background: ${(p) => (p.$on ? '#0078d7' : '#e1e1e1')};
`;
const Corner = styled.th`
  background: #e1e1e1; line-height: 13px; border-right: 1px solid #666;
  && { padding-top: 15px; }
`;
const Head = styled.th<{ $line?: boolean }>` line-height: 15px; ${(p) => p.$line && 'border-right: 1px solid #888;'} `;
const GridScroll = styled.div` display: flex; justify-content: center; align-items: flex-start; padding-top: 2px; height: 37px; `;

const SheetTabs = styled.div`
  flex: none; display: flex; height: 18px; border-top: 2px solid #8a8a8a;
  font: 11px/14px ${SANS}; color: #000; overflow: hidden;
`;
const SheetTab = styled.button<{ $on?: boolean }>`
  flex: none; height: 16px; padding: 0 4px 0 3px; line-height: 15px;
  background: ${(p) => (p.$on ? '#f6f6f6' : '#e1e1e1')};
  border: solid #666; border-width: 0 1px 1px 0; border-radius: 0 0 3px 0;
`;
const TabNav = styled.button<{ $off?: boolean }>`
  width: 16px; height: 16px; display: grid; place-items: center;
  border: 1px solid; border-color: #fff #888 #888 #fff; color: ${(p) => (p.$off ? '#a0a0a0' : '#000')};
`;

const sheetNames = 'Knoten,Linien,Materialien,Flächen,Volumenkörper,Öffnungen,Knotenlager,Linienlager,Flächenlager,Liniengelenke,Querschnitte,Stabendgelenke,Stabexzentrizitäten,Stabteilungen,Stäbe,Stabbettungen,Stabnichtlinearitäten,Stabsätze,Durchdringungen'.split(',');

/* ---------- right panel ---------- */

const PanelBody = styled.div` padding: 6px 4px; font: 11px/14px ${PANEL}; color: #000; `;
const LegendBox = styled.ul`
  height: 361px; margin: 3px 0 0 1px; padding: 2px 0 0 5px; background: #fff;
  border: solid #9c9c9c; border-width: 1px 0 0 1px;
  li { display: flex; align-items: center; gap: 4px; height: 18px; white-space: nowrap; }
`;
const Swatch = styled.span<{ $c: string }>` width: 16px; height: 15px; background: ${(p) => p.$c}; border: 1px solid #d4d4d4; `;
const PanelButton = styled.button`
  display: grid; place-items: center; width: 25px; height: 21px; margin: 15px 0 0 2px;
  border: 1px solid #adadad; background: #e1e1e1;
`;

/* ---------- status bar ---------- */

const StatusBar = styled.footer`
  display: flex; align-items: center; padding: 0 17px 0 4px; white-space: nowrap;
  background: linear-gradient(#a4a8b2 0 1px, #e2e4e9 1px, #cfd2da 9px, #a8adb8 10px, #b9bec8);
  font: 11px/14px ${SANS}; color: #2c2e38;
`;
const Mode = styled.button<{ $on?: boolean; $w: number }>`
  width: ${(p) => p.$w}px; height: 18px; margin-right: 3px; line-height: 16px;
  border: 1px solid; border-color: ${(p) => (p.$on ? '#fff #8c909a #8c909a #fff' : '#222 #f0f0f4 #f0f0f4 #222')};
`;
const Info = styled.span<{ $w: number }>`
  width: ${(p) => p.$w}px; padding-left: 2px; line-height: 18px; border-left: 1px solid #888c98;
`;
const Coord = styled.span` margin-left: 95px; margin-right: 2px; `;

const menus: [string, string, string][] = [
  ['', 'D', 'atei'], ['Bearbeite', 'n', ''], ['', 'A', 'nsicht'], ['', 'E', 'infügen'], ['Be', 'r', 'echnung'], ['Er', 'g', 'ebnisse'],
  ['E', 'x', 'tras'], ['', 'T', 'abelle'], ['', 'O', 'ptionen'], ['', 'Z', 'usatzmodule'], ['', 'F', 'enster'], ['', 'H', 'ilfe'],
];

const Title = ({ text }: { text: string }) => (
  <DockTitle>
    <h2>{text}</h2>
    <button aria-label="Anheften"><PinGlyph /></button>
    <button aria-label="Schließen"><CloseGlyph /></button>
  </DockTitle>
);

export default function App() {
  return (
    <Window>
      <Global />
      <TitleBar>
        <svg width="16" height="18" viewBox="0 0 16 18">
          <path d="M4 5l6-4 5 3v8l-6 4-5-3z" fill="#7f95b0" stroke="#26405e" /><path d="M4 5l5 3 6-4M9 8v8" stroke="#26405e" fill="none" />
          <text x="1" y="15" fontSize="11" fontWeight="bold" fill="#ffd84c" fontFamily="Liberation Sans">5</text>
        </svg>
        <h1>RFEM 5.22.01 x64 - [fds*]</h1>
        <WinButton aria-label="Minimieren"><svg width="10" height="10"><path d="M0 5.500h10" stroke="#fff" /></svg></WinButton>
        <WinButton aria-label="Wiederherstellen"><svg width="11" height="11"><path d="M.5 2.500h7v8h-7zM2.500 2V.5h8v8H8" stroke="#fff" fill="none" /></svg></WinButton>
        <WinButton aria-label="Schließen"><svg width="11" height="11"><path d="M.5.5l10 10M10.500.5l-10 10" stroke="#fff" /></svg></WinButton>
      </TitleBar>

      <MenuBar>
        <Grip />
        <MenuLogo width="16" height="13" viewBox="0 0 16 13">
          <rect width="16" height="13" fill="#1c2c60" />
          <path d="M0 9h16M5.500 1v12M7.500 1v12M5 2L0 8M8 2l7 6.500M5 5L2 9M8 5l4 4M10.500 5v4" stroke="#e8eefc" fill="none" />
        </MenuLogo>
        {menus.map(([a, u, b]) => <MenuItem key={a + u + b}>{a}<u>{u}</u>{b}</MenuItem>)}
        <Spacer />
        <MdiButton aria-label="Minimieren"><svg width="8" height="8"><path d="M0 6h6" stroke="#555" strokeWidth="2" /></svg></MdiButton>
        <MdiButton aria-label="Wiederherstellen"><svg width="9" height="8"><path d="M2.500.5h6v5M.5 2.500h6v5h-6z" stroke="#666" fill="none" /></svg></MdiButton>
        <MdiButton aria-label="Schließen"><svg width="8" height="8"><path d="M1 0l6 8M7 0L1 8" stroke="#666" strokeWidth="1.600" /></svg></MdiButton>
      </MenuBar>

      <Toolbars>
        {rows.map((groups, r) => (
          <ToolRow key={r}>
            {groups.map((g) => <ToolGroup key={g} role="toolbar"><Grip /><Tools items={g} /></ToolGroup>)}
          </ToolRow>
        ))}
      </Toolbars>

      <Work>
        <Dock>
          <DockFrame>
            <Title text="Projekt-Navigator - Zeigen" />
            <TreeBox>
              <Tree>{tree.map((it, k) => <TreeItem key={k} it={it} index={k} />)}</Tree>
              <ScrollV>
                <ScrollBtn aria-label="Nach oben"><Chevron turn={0} /></ScrollBtn><span /><Thumb /><span />
                <ScrollBtn aria-label="Nach unten"><Chevron turn={180} /></ScrollBtn>
              </ScrollV>
              <ScrollH>
                <ScrollBtn aria-label="Nach links"><Chevron turn={-90} /></ScrollBtn><Thumb /><span />
                <ScrollBtn aria-label="Nach rechts"><Chevron turn={90} /></ScrollBtn>
              </ScrollH>
            </TreeBox>
          </DockFrame>
          <DockTabs>
            <DockTab><Icon name="daten" />Daten</DockTab>
            <DockTab $on><Icon name="zeigen" />Zeigen</DockTab>
            <DockTab><Icon name="ansichten" />Ansichten</DockTab>
          </DockTabs>
        </Dock>

        <Centre>
          <Viewport>
            <Model />
            <Dialog role="dialog" aria-label="Warnung">
              <DialogHead>
                <svg width="32" height="32" viewBox="0 0 32 32">
                  <path d="M15 3L1 29h28z" fill="#c8c8c8" stroke="#989898" strokeLinejoin="round" strokeWidth="2" />
                  <path d="M15 6L4 27h22z" fill="#f8c414" stroke="#c08c00" /><path d="M15 6L4 27h10z" fill="#ffe060" opacity=".6" />
                  <path d="M13 11h4l-1 9h-2z" fill="#2c2c2c" /><circle cx="15" cy="23.500" r="2" fill="#2c2c2c" />
                </svg>
                <h2>Verzerrte Elemente wurden im FE-Netz erkannt</h2>
              </DialogHead>
              <DialogText>
                <p>Verzerrte Elemente wurden im FE-Netz erkannt. Anzahl der Elemente, bei denen der Grenzwert der FE-Netz-Qualitätskriterien erreicht wurde: 8.</p>
                <p>Die Berechnung kann ungenaue Ergebnisse ergeben.</p>
                <p>Wollen Sie trotzdem die Berechnung starten?</p>
              </DialogText>
              <DialogButtons>
                <DialogButton><span>Ja</span></DialogButton>
                <DialogButton>Nein</DialogButton>
                <DialogButton>Nein, verzerrte Elemente anzeigen</DialogButton>
              </DialogButtons>
            </Dialog>
          </Viewport>

          <TableDock>
            <Title text="1.1 Knoten" />
            <TableTools role="toolbar"><Tools items={tableTools} /></TableTools>
            <GridBox>
              <NodeTable>
                <colgroup>
                  {[44, 85, 72, 90, 78, 78, 78].map((w, k) => <col key={k} style={{ width: w }} />)}<col />
                </colgroup>
                <thead>
                  <tr>
                    <Corner rowSpan={3} scope="col">Knoten<br />Nr.</Corner>
                    {'ABCDEFG'.split('').map((l) => <Letter key={l} $on={l === 'A'} scope="col">{l}</Letter>)}
                  </tr>
                  <tr>
                    <Head $line /><Head $line>Bezug</Head><Head $line>Koordinaten-</Head><Head $line colSpan={3}>Knotenkoordinaten</Head><Head />
                  </tr>
                  <tr>
                    <Head $line>Knotentyp</Head><Head $line>knoten</Head><Head $line>system</Head><Head $line>X [m]</Head><Head $line>Y [m]</Head><Head $line>Z [m]</Head><Head>Kommentar</Head>
                  </tr>
                </thead>
              </NodeTable>
              <GridScroll><ScrollBtn aria-label="Nach oben"><Chevron turn={0} /></ScrollBtn></GridScroll>
            </GridBox>
            <SheetTabs>
              {sheetNames.map((n, k) => <SheetTab key={n} $on={k === 0}>{n}</SheetTab>)}
              <Spacer />
              <TabNav $off aria-label="Erste"><svg width="7" height="7"><path d="M.5 0v7M6 0v7L2 3.500z" fill="currentColor" stroke="currentColor" strokeWidth=".5" /></svg></TabNav>
              <TabNav $off aria-label="Vorige"><svg width="7" height="7"><path d="M5 0v7L1 3.500z" fill="currentColor" /></svg></TabNav>
              <TabNav aria-label="Nächste"><svg width="7" height="7"><path d="M2 0v7l4-3.500z" fill="currentColor" /></svg></TabNav>
              <TabNav aria-label="Letzte"><svg width="7" height="7"><path d="M1 0v7l4-3.500zM6 0v7" fill="currentColor" stroke="currentColor" /></svg></TabNav>
            </SheetTabs>
          </TableDock>
        </Centre>

        <Dock>
          <DockFrame $bg="#f0f0f0">
            <Title text="Panel" />
            <PanelBody>
              <h2>FE-Netzqualität</h2>
              <LegendBox>
                <li><Swatch $c="#0f0" />OK (92/93, 98.92%)</li>
                <li><Swatch $c="#ff0" />Warnung (0/93, 0.00%)</li>
                <li><Swatch $c="#f00" />Fehlgeschlagen (1/93, 1.08%)</li>
              </LegendBox>
              <PanelButton aria-label="Optionen">
                <svg width="17" height="16" viewBox="0 0 17 16">
                  <rect x="1" y="2" width="7" height="11" rx="2" fill="#a89880" stroke="#4c4438" /><path d="M3 2v11" stroke="#eee" strokeWidth="1.500" />
                  <path d="M8 2h6v3M12 1h4" stroke="#555" strokeWidth="2" fill="none" /><rect x="9.500" y="6.500" width="6" height="9" fill="#f4f4f4" stroke="#777" /><path d="M11 9h3M11 11h3M11 13h3" stroke="#777" />
                </svg>
              </PanelButton>
            </PanelBody>
          </DockFrame>
          <DockTabs><DockTab $on aria-label="Farbskala"><Icon name="qualitaet" /></DockTab></DockTabs>
        </Dock>
      </Work>

      <StatusBar>
        <span>Arbeitsebene</span>
        <Spacer />
        <Mode $w={37}>FANG</Mode><Mode $w={46} $on>RASTER</Mode><Mode $w={49}>KARTES</Mode><Mode $w={45}>OFANG</Mode><Mode $w={49}>HLINIEN</Mode><Mode $w={28}>DXF</Mode>
        <Coord>KS: Globales XYZ</Coord>
        <Info $w={88}>Ebene: XY</Info>
        <Info $w={74}>X: &nbsp;-1.455 m</Info>
        <Info $w={74}>Y: &nbsp;3.178 m</Info>
        <Info $w={56}>Z: &nbsp;0.000 m</Info>
      </StatusBar>
    </Window>
  );
}
